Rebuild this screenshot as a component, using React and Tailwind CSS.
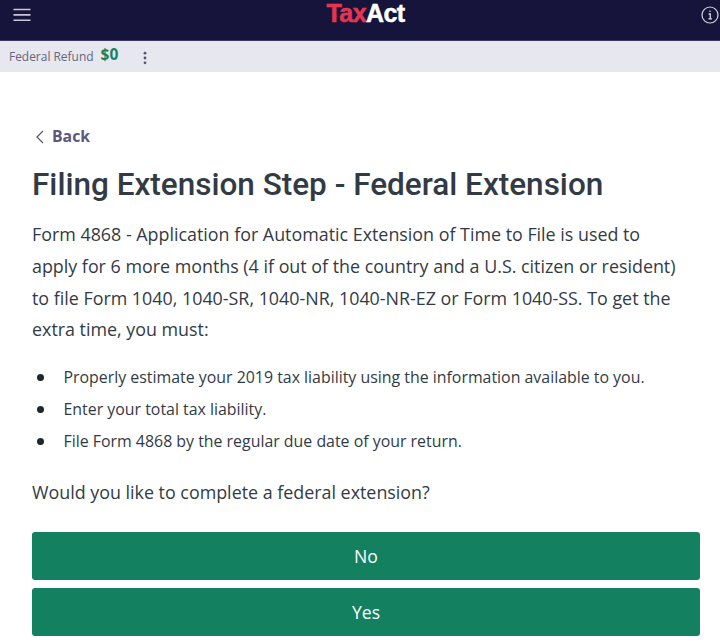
export default function App() {
  const open = { fontFamily: '"Open Sans", sans-serif' };
  return (
    <div className="w-[720px] h-[644px] bg-white overflow-hidden text-[#323b45]" style={open}>
      <header className="h-[41px] bg-[#17143b] flex items-start justify-between pl-[13px] pr-[1px] border-b border-[#3a3760]">
        <svg width="18" height="14" viewBox="0 0 18 14" className="mt-[8px]" fill="none" stroke="#c9c6d6" strokeWidth="1.6">
          <path d="M0.5 1.5H17.5M0.5 6.9H17.5M0.5 12.2H17.5" />
        </svg>
        <div className="flex mt-[1px] -ml-[1px] text-[25px] leading-[24px] font-black tracking-[-0.6px]" style={{ fontFamily: '"Liberation Sans", sans-serif', WebkitTextStroke: '0.5px currentColor' }}>
          <span className="text-[#e8354f]">Tax</span>
          <span className="text-white">Act</span>
        </div>
        <svg width="18" height="18" viewBox="0 0 18 18" className="mt-[6px]" fill="none" stroke="#d5d3df">
          <circle cx="9" cy="9" r="8" strokeWidth="1.2" />
          <path d="M7.6 8H9.3V12.8M7.4 12.8H11" strokeWidth="1.3" />
          <circle cx="9" cy="5.2" r="0.8" fill="#d5d3df" stroke="none" />
        </svg>
      </header>
      <div className="h-[31px] bg-[#e7e7f0] flex items-center pl-[9px]">
        <span className="text-[11.95px] text-[#66667c]">Federal Refund</span>
        <span className="ml-[7px] text-[15.5px] font-bold text-[#14825f] -mt-[3px]">$0</span>
        <svg width="4" height="14" viewBox="0 0 4 14" className="ml-[25px] mt-[2px]" fill="#55556b">
          <circle cx="2" cy="2.2" r="1.4" />
          <circle cx="2" cy="7" r="1.4" />
          <circle cx="2" cy="11.8" r="1.4" />
        </svg>
      </div>
      <main className="pl-[32px] pr-[20px]">
        <div className="flex items-center mt-[54px] h-[22px] text-[#5b5878]">
          <svg width="10" height="14" viewBox="0 0 10 14" fill="none" stroke="#5b5878" strokeWidth="1.3" className="ml-[3px]">
            <path d="M8 1L2 7L8 13" />
          </svg>
          <span className="ml-[7px] text-[15.8px] font-bold">Back</span>
        </div>
        <h1 className="mt-[17px] text-[31.5px] leading-[40px] font-medium text-[#323b45]" style={{ fontFamily: 'Roboto, sans-serif' }}>
          Filing Extension Step - Federal Extension
        </h1>
        <p className="mt-[14px] text-[17.87px] leading-[31.75px] w-[650px]">
          Form 4868 - Application for Automatic Extension of Time to File is used to apply for 6 more months (4 if out of the country and a U.S. citizen or resident) to file Form 1040, 1040-SR, 1040-NR, 1040-NR-EZ or Form 1040-SS. To get the extra time, you must:
        </p>
        <ul className="mt-[16px] text-[15.9px] leading-[31.75px]">
          {[
            "Properly estimate your 2019 tax liability using the information available to you.",
            "Enter your total tax liability.",
            "File Form 4868 by the regular due date of your return.",
          ].map((t) => (
            <li key={t} className="flex items-center">
              <span className="w-[7px] h-[7px] rounded-full bg-[#20262d] ml-[5px] mr-[19.5px]" />
              {t}
            </li>
          ))}
        </ul>
        <p className="mt-[19px] text-[17.87px] leading-[32px]">Would you like to complete a federal extension?</p>
        <div className="mt-[24px] flex flex-col gap-[8px]">
          <button className="h-[48px] bg-[#138060] rounded-[3px] text-white text-[17.6px] font-medium">No</button>
          <button className="h-[48px] bg-[#138060] rounded-[3px] text-white text-[17.6px] font-medium">Yes</button>
        </div>
      </main>
    </div>
  );
}
